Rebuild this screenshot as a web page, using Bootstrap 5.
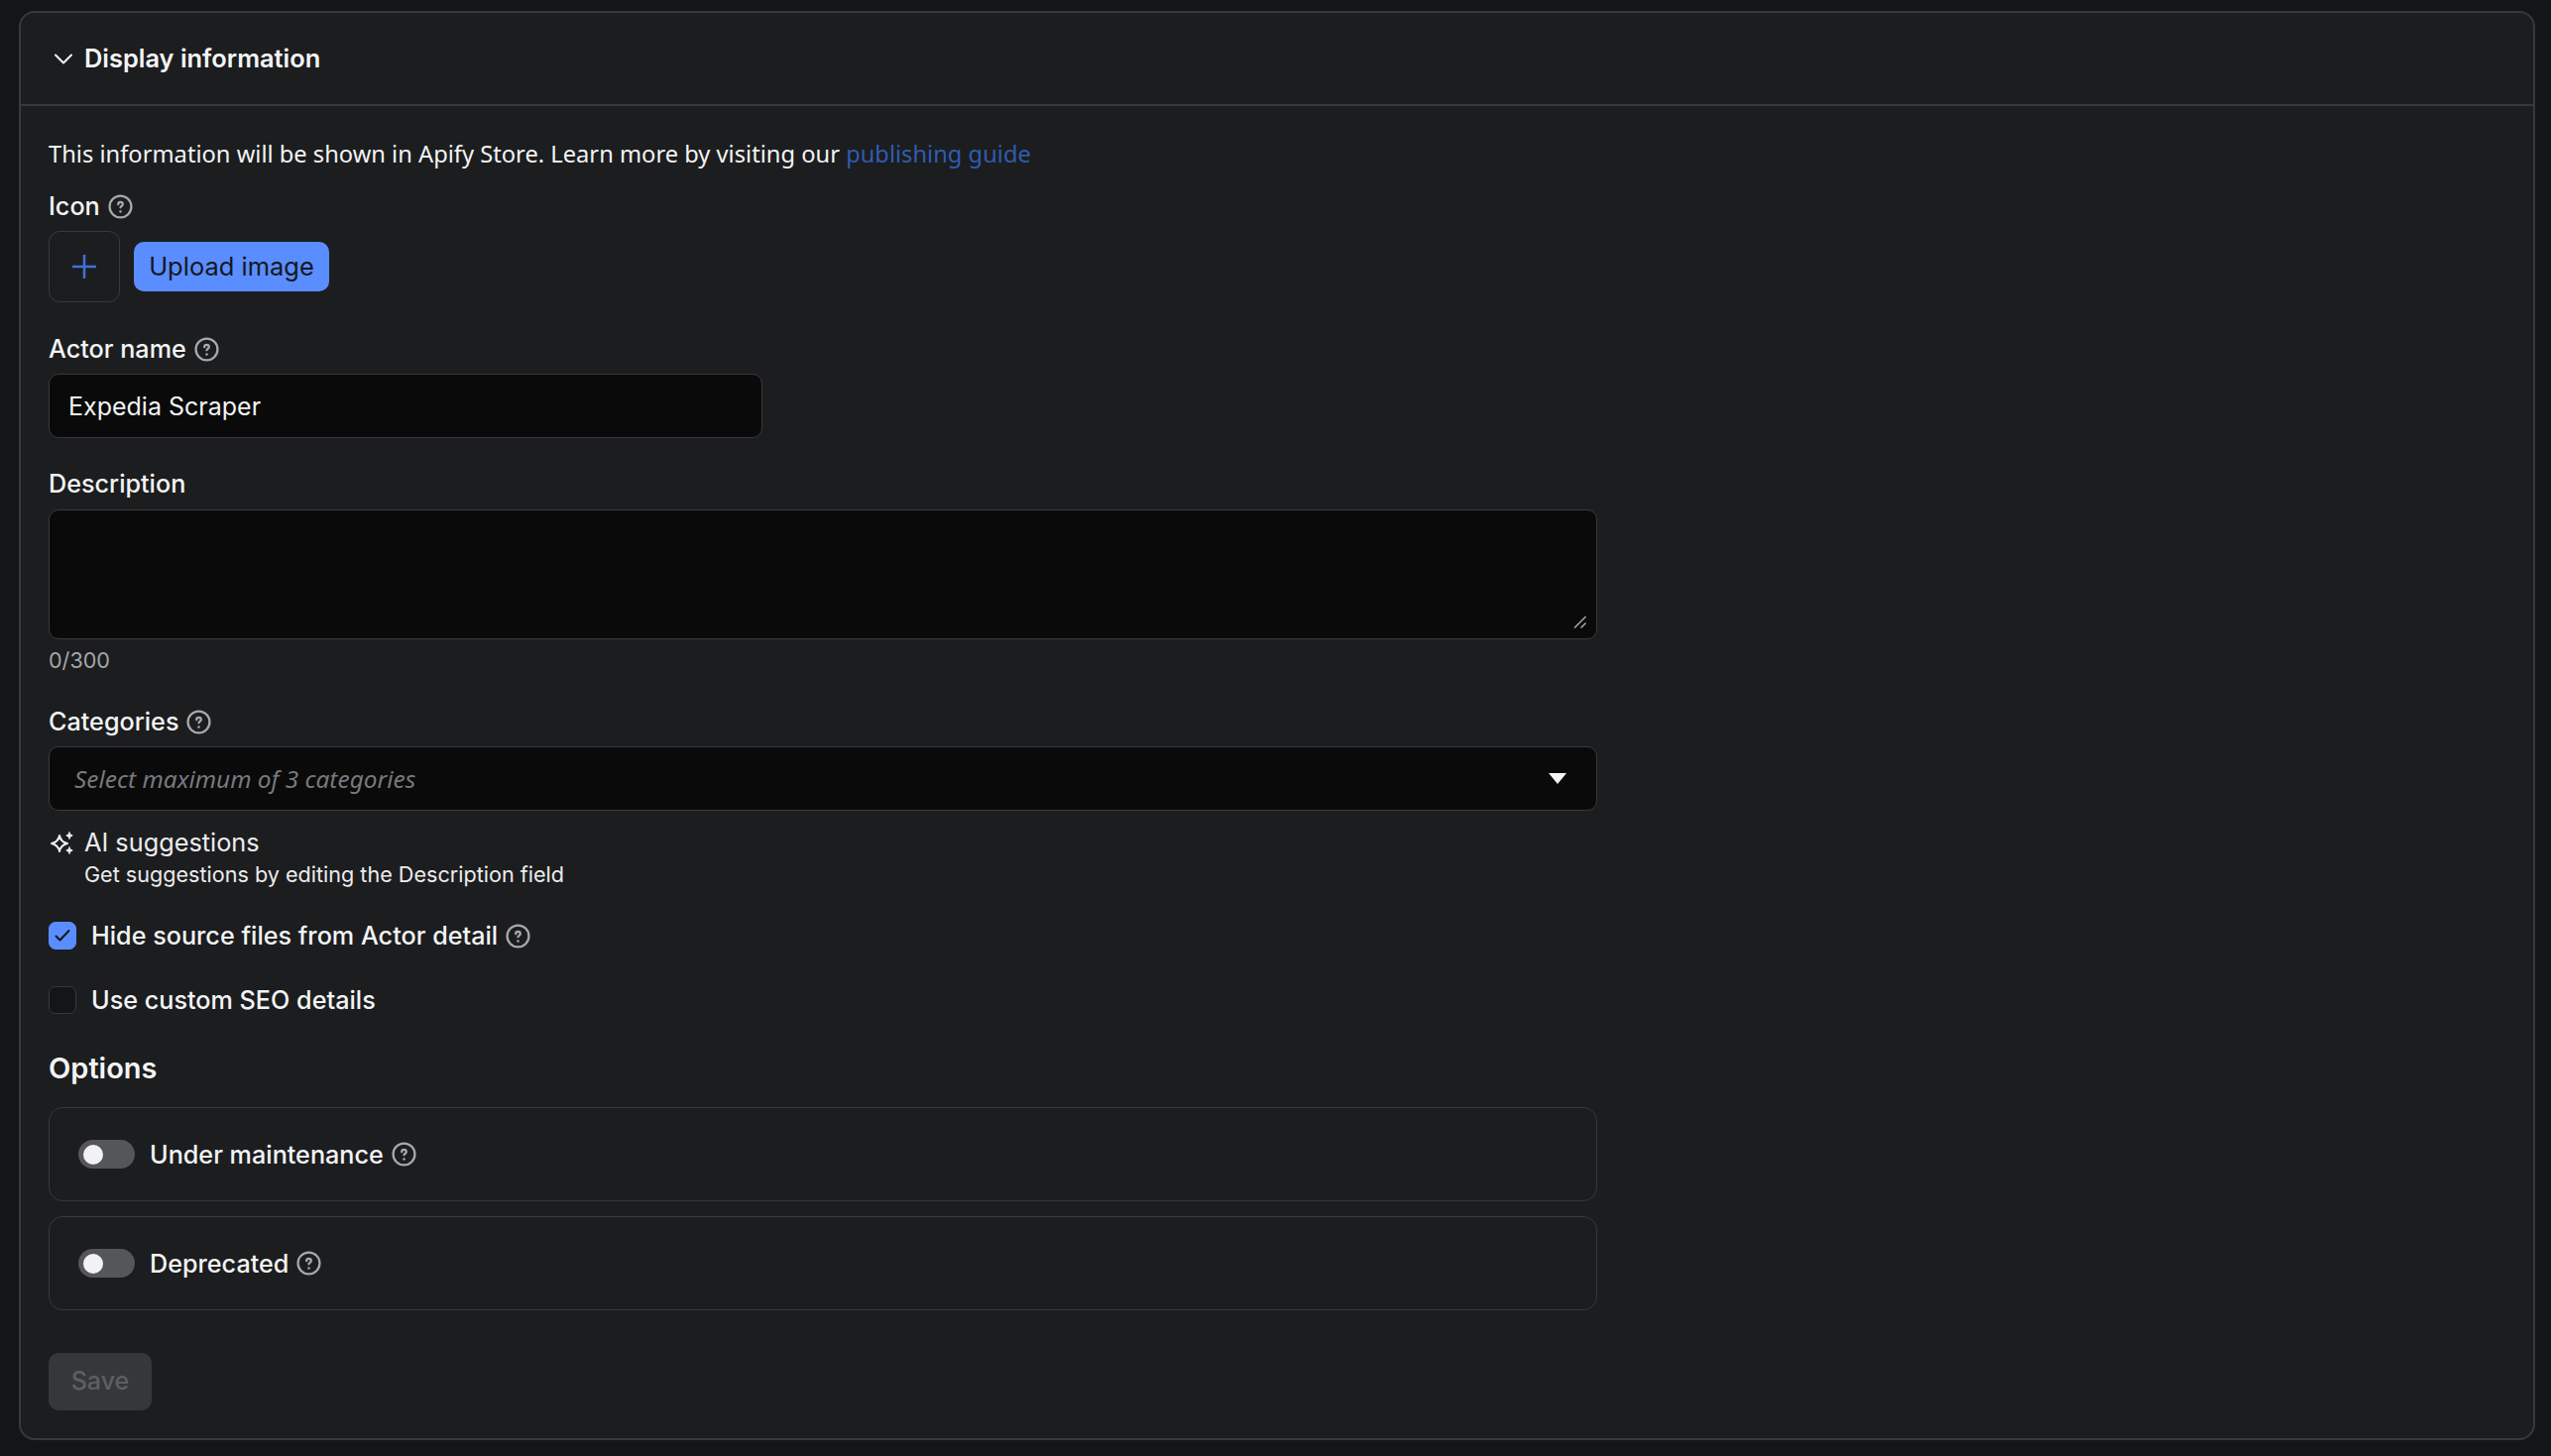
<!DOCTYPE html>
<html lang="en" data-bs-theme="dark">
<head>
<meta charset="utf-8">
<title>Display information</title>
<link href="https://cdn.jsdelivr.net/npm/bootstrap@5.3.0/dist/css/bootstrap.min.css" rel="stylesheet">
<style>
html,body{height:100%}
body{background:#141517;color:#f3f4f4;font-family:Inter,"Liberation Sans",sans-serif;font-size:25.2px;line-height:36px;padding:11px 16px 16px 19px}
.panel{background:#1c1d1f;border:2px solid #38393c;border-radius:16px;height:1442px;--bs-card-bg:#1c1d1f}
.panel-head{height:94px;background:transparent;border-bottom:2px solid #38393c;padding:0 0 0 32px;font-weight:600;font-size:25.4px;color:#f3f4f4;gap:10px}
.panel-body{padding:30px 0 0 28px;width:1590px}
.intro{font-family:"Noto Sans",sans-serif;font-size:23.7px;line-height:36px;margin-bottom:17px;color:#f3f4f4}
.intro a{color:#2f5cb0;text-decoration:none}
.fld-label{font-weight:500;font-size:25.2px;line-height:36px;margin:0;color:#f3f4f4;gap:8px}
.gap-label{margin-bottom:7px}
.gap-desc{margin-bottom:8px}
.help{width:25px;height:25px;flex:none}
.icon-row{gap:14px;margin:7px 0 29px}
.icon-box{width:72px;height:72px;border:1.5px solid #38393c;border-radius:11px}
.upload-btn{height:50px;width:197px;padding:0;background:#5a8dff;border:0;border-radius:10px;color:#15171c;font-size:25.5px;font-weight:400;--bs-btn-hover-bg:#5a8dff}
.name-input,.desc-input,.cat-select{background:#0a0a0a;border:1.5px solid #38393c;border-radius:10px;color:#f3f4f4;font-size:25px}
.name-input{width:720px;height:65px;padding:0 19px;margin-bottom:28px}
.desc-input{height:131px;padding:12px 19px;resize:none;display:block}
.grip{right:11px;bottom:11px}
.count{font-size:21.6px;line-height:30px;color:#a5a7aa;margin:6px 0 29px}
.cat-select{height:65px;padding:0 30px 0 25px}
.cat-ph{font-family:"Noto Sans",sans-serif;font-style:italic;font-size:24.4px;color:#77797c}
.ai-row{gap:10px;margin:15px 0 29px}
.ai-title{font-size:25.3px;line-height:34px;color:#ececed}
.ai-sub{font-size:21.6px;line-height:30px;color:#ececed}
.tick{width:28px;height:28px;margin:0;flex:none;border-radius:7px;background-color:#141517;border:1.5px solid #38393c;display:flex;align-items:center;justify-content:center}
.tick-on{background:#5a8dff;border-color:#5a8dff}
.tick-row{font-weight:500;font-size:25.2px;line-height:36px;gap:15px;margin-bottom:29px}
.tick-row-last{margin-bottom:31px}
.opts-title{font-size:29px;font-weight:600;line-height:40px;margin:0 0 19px}
.opt-box{height:95px;background:transparent;border:1.5px solid #38393c;border-radius:14px;padding:0 0 0 29px;margin-bottom:15px;font-weight:500;font-size:25.2px;gap:15px}
.opt-switch{width:57px;height:29px;border-radius:15px;background:#55565a;padding-left:5px;flex:none}
.opt-knob{width:20px;height:20px;border-radius:50%;background:#f2f2f2}
.save-btn{width:104px;height:58px;margin-top:28px;background:#36373a;border:0;border-radius:10px;color:#5d5f62;font-size:25px;font-weight:500;--bs-btn-disabled-bg:#36373a;--bs-btn-disabled-color:#5d5f62;--bs-btn-disabled-opacity:1}
</style>
</head>
<body>
<svg class="d-none"><symbol id="q" viewBox="0 0 24 24"><g fill="none" stroke="#a8a9ab" stroke-linecap="round"><circle cx="12" cy="12" r="10.500" stroke-width="2.200"/><path stroke-width="2.200" d="M9.800 9.800a2.200 2.200 0 0 1 4.400 0c0 1.400-2.200 1.700-2.200 3"/><path stroke-width="2.400" d="M12 16.800v.1"/></g></symbol></svg>
<div class="card panel">
  <div class="card-header panel-head d-flex align-items-center">
    <svg width="22" height="22" viewBox="0 0 22 22" fill="none" stroke="#f3f4f4" stroke-width="2" stroke-linecap="round" stroke-linejoin="round"><path d="M3 7.500l8 8 8-8"/></svg>
    <span>Display information</span>
  </div>
  <div class="panel-body">
    <div class="intro">This information will be shown in Apify Store. Learn more by visiting our <a href="#">publishing guide</a></div>

    <div class="d-flex align-items-center fld-label">Icon <svg class="help"><use href="#q"/></svg></div>
    <div class="d-flex align-items-center icon-row">
      <div class="icon-box d-flex align-items-center justify-content-center">
        <svg width="24" height="24" viewBox="0 0 24 24" fill="none" stroke="#3f71d9" stroke-width="2.500"><path d="M12 0v24M0 12h24"/></svg>
      </div>
      <button class="btn upload-btn" type="button">Upload image</button>
    </div>

    <div class="d-flex align-items-center fld-label gap-label">Actor name <svg class="help"><use href="#q"/></svg></div>
    <input class="form-control name-input" type="text" value="Expedia Scraper">

    <div class="fld-label gap-desc">Description</div>
    <div class="position-relative">
      <textarea class="form-control desc-input"></textarea>
      <svg class="grip position-absolute" width="13" height="13" viewBox="0 0 13 13" fill="none" stroke="#a9a9a9" stroke-width="1.500"><path d="M1 12.500L12.500 1M7.500 12.500l5-5"/></svg>
    </div>
    <div class="count">0/300</div>

    <div class="d-flex align-items-center fld-label gap-label">Categories <svg class="help"><use href="#q"/></svg></div>
    <div class="cat-select d-flex align-items-center justify-content-between">
      <span class="cat-ph">Select maximum of 3 categories</span>
      <svg width="18" height="11" viewBox="0 0 18 11" fill="#f5f5f5"><path d="M0 0h18l-9 11z"/></svg>
    </div>

    <div class="d-flex ai-row">
      <svg class="mt-1" width="26" height="26" viewBox="0 0 26 26" fill="none" stroke="#f0f0f0" stroke-width="2" stroke-linejoin="round"><path d="M11 6C12 10.800 14.200 13 19 14 14.200 15 12 17.200 11 22 10 17.200 7.800 15 3 14 7.800 13 10 10.800 11 6z"/><path fill="#f0f0f0" stroke-width="1" d="M21 2.500c.4 2 1.200 3 3.200 3.500-2 .5-2.800 1.500-3.200 3.500-.4-2-1.200-3-3.200-3.500 2-.5 2.800-1.500 3.200-3.500zM21 17.500c.4 2 1.200 3 3.200 3.500-2 .5-2.800 1.500-3.200 3.500-.4-2-1.200-3-3.200-3.500 2-.5 2.800-1.500 3.200-3.500z"/></svg>
      <div>
        <div class="ai-title">AI suggestions</div>
        <div class="ai-sub">Get suggestions by editing the Description field</div>
      </div>
    </div>

    <div class="d-flex align-items-center tick-row">
      <span class="tick tick-on"><svg width="16" height="14" viewBox="0 0 16 14" fill="none" stroke="#15171c" stroke-width="2" stroke-linecap="round" stroke-linejoin="round"><path d="M1.500 7.500l4 4 9-9.500"/></svg></span>
      <span class="d-flex align-items-center fld-label">Hide source files from Actor detail <svg class="help"><use href="#q"/></svg></span>
    </div>
    <div class="d-flex align-items-center tick-row tick-row-last">
      <span class="tick"></span>
      <span>Use custom SEO details</span>
    </div>

    <div class="opts-title">Options</div>

    <div class="opt-box d-flex align-items-center">
      <span class="opt-switch d-flex align-items-center"><span class="opt-knob"></span></span>
      <span class="d-flex align-items-center fld-label">Under maintenance <svg class="help"><use href="#q"/></svg></span>
    </div>
    <div class="opt-box d-flex align-items-center">
      <span class="opt-switch d-flex align-items-center"><span class="opt-knob"></span></span>
      <span class="d-flex align-items-center fld-label">Deprecated <svg class="help"><use href="#q"/></svg></span>
    </div>

    <button class="btn save-btn" type="button" disabled>Save</button>
  </div>
</div>
<script src="https://cdn.jsdelivr.net/npm/bootstrap@5.3.0/dist/js/bootstrap.bundle.min.js"></script>
</body>
</html>
